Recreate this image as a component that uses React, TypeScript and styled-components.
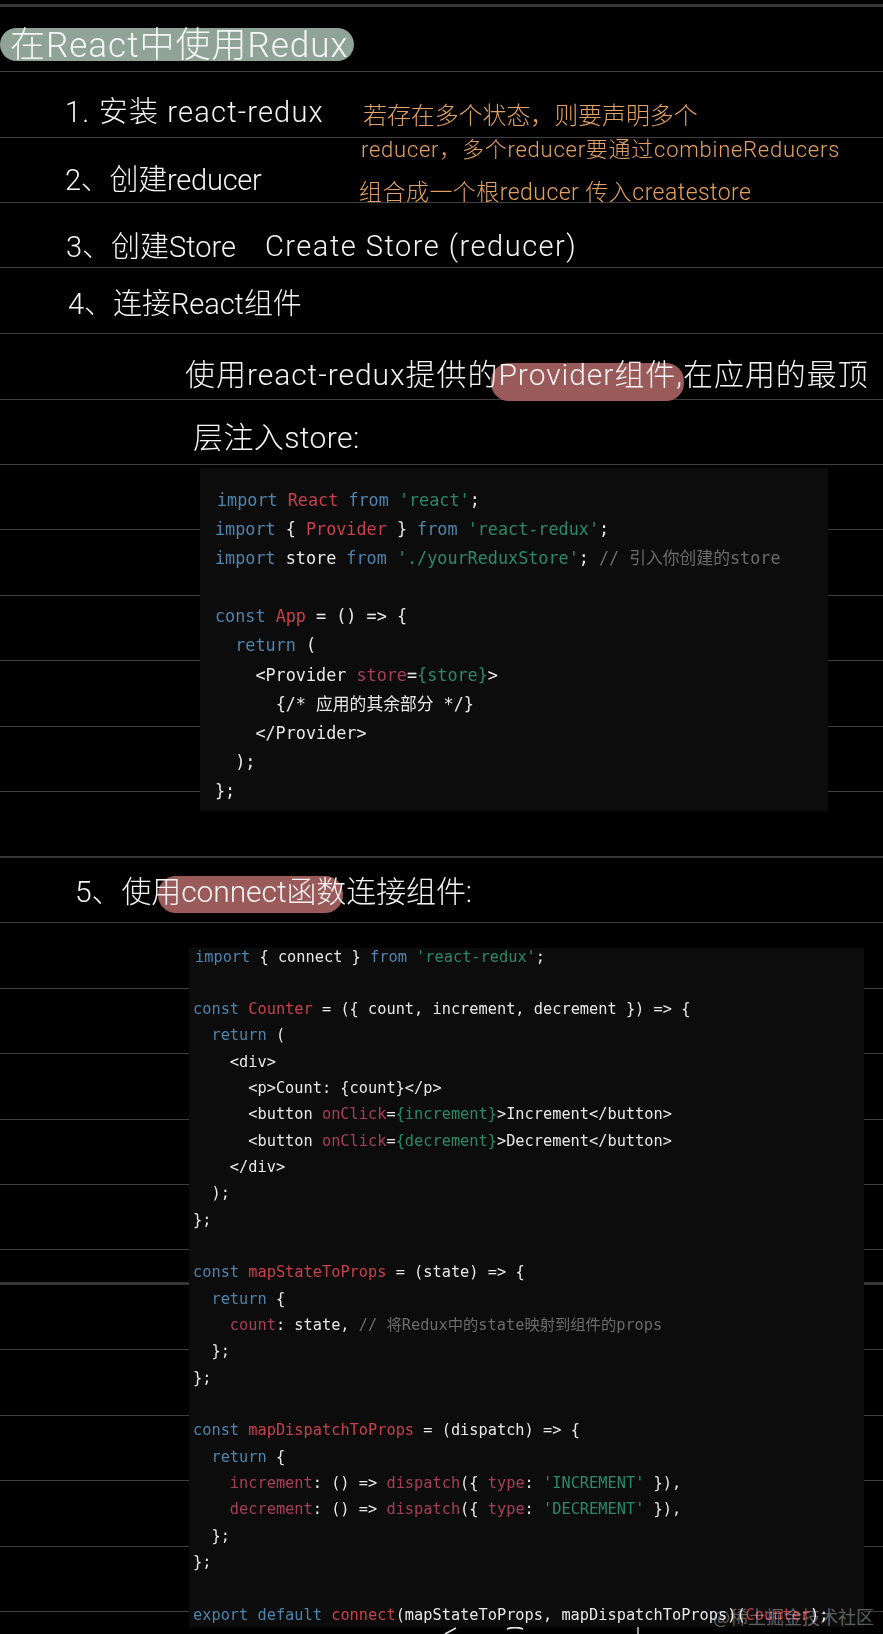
import React from "react";
import styled, { createGlobalStyle } from "styled-components";

const Global = createGlobalStyle`
  html, body { margin: 0; padding: 0; background: #000; }
`;

const Sheet = styled.main`
  position: relative;
  width: 883px;
  height: 1634px;
  overflow: hidden;
  background: #000;
  display: grid;
  grid-template-columns: 883px;
  grid-template-rows: 1634px;
`;

const RuleLayer = styled.div`
  grid-area: 1 / 1;
  display: flex;
  flex-direction: column;
`;

const Rule = styled.div<{ $gap: number; $weight: number }>`
  flex: none;
  margin-top: ${(p) => p.$gap}px;
  height: ${(p) => p.$weight}px;
  background: ${(p) => (p.$weight > 1 ? "#363636" : "#3f3f3f")};
`;

const ContentLayer = styled.div`
  grid-area: 1 / 1;
  display: flex;
  flex-direction: column;
  filter: blur(0.35px);
`;

const handFont = `Roboto, "Noto Sans CJK SC", sans-serif`;

const TitlePill = styled.h1`
  flex: none;
  box-sizing: border-box;
  width: 354px;
  height: 33px;
  margin: 28px 0 0;
  padding-left: 10px;
  border-radius: 17px;
  background: #8fa397;
  color: #f6f6f6;
  font: 300 35px/35px ${handFont};
  letter-spacing: 1px;
  white-space: nowrap;
`;

const PlanGrid = styled.section`
  flex: none;
  height: 136px;
  margin-top: 17px;
  display: grid;
  grid-template-columns: 359px 1fr;
`;

const Steps = styled.div`
  display: flex;
  flex-direction: column;
`;

const Hand = styled.div<{ $indent: number; $height: number; $size: number; $track: number }>`
  flex: none;
  isolation: isolate;
  height: ${(p) => p.$height}px;
  padding-left: ${(p) => p.$indent}px;
  color: #f4f4f4;
  font: 300 ${(p) => p.$size}px/${(p) => p.$height}px ${handFont};
  letter-spacing: ${(p) => p.$track}px;
  white-space: nowrap;
`;

const Notes = styled.div`
  padding-top: 20px;
  display: flex;
  flex-direction: column;
`;

const Note = styled.div<{ $indent: number; $height: number; $size: number; $track: number }>`
  flex: none;
  height: ${(p) => p.$height}px;
  padding-left: ${(p) => p.$indent}px;
  color: #e3a163;
  font: 300 ${(p) => p.$size}px/${(p) => p.$height}px ${handFont};
  letter-spacing: ${(p) => p.$track}px;
  white-space: nowrap;
`;

const StepWithCall = styled.div`
  flex: none;
  display: grid;
  grid-template-columns: 265px 1fr;
`;

const Mark = styled.span<{ $left: number; $right: number; $top: number; $bottom: number }>`
  position: relative;
  display: inline-block;
  &::before {
    content: "";
    position: absolute;
    z-index: -1;
    top: ${(p) => p.$top}px;
    bottom: ${(p) => p.$bottom}px;
    left: ${(p) => p.$left}px;
    right: ${(p) => p.$right}px;
    border-radius: 18px;
    background: #9a5a5a;
  }
`;

const Spacer = styled.div<{ $height: number }>`
  flex: none;
  height: ${(p) => p.$height}px;
`;

const CodePanel = styled.pre<{ $left: number; $width: number; $height: number; $size: number; $leading: number; $pad: string }>`
  flex: none;
  box-sizing: border-box;
  width: ${(p) => p.$width}px;
  height: ${(p) => p.$height}px;
  margin: 0 0 0 ${(p) => p.$left}px;
  padding: ${(p) => p.$pad};
  background: #0c0c0d;
  color: #e8e8e8;
  font: 400 ${(p) => p.$size}px/${(p) => p.$leading}px "DejaVu Sans Mono", "Noto Sans CJK SC", monospace;
  white-space: pre;
`;

const CodeLine = styled.div<{ $nudge?: number; $lift?: number; $leading: number }>`
  height: ${(p) => p.$leading}px;
  margin-top: ${(p) => -(p.$lift ?? 0)}px;
  padding-left: ${(p) => p.$nudge ?? 0}px;
`;

const Kw = styled.span`color: #4f84ad;`;
const Id = styled.span`color: #c8414c;`;
const At = styled.span`color: #a83e5e;`;
const Str = styled.span`color: #2c8a68;`;
const Cm = styled.span`color: #6b6b6b;`;

const Watermark = styled.div`
  position: absolute;
  right: 9px;
  bottom: 7px;
  color: rgba(255, 255, 255, 0.36);
  font: 400 18px/22px "Noto Sans CJK SC", sans-serif;
  white-space: nowrap;
`;

const Fragments = styled.svg`
  flex: none;
  display: block;
  width: 883px;
  height: 7px;
`;

const rules: [number, number][] = [
  [4, 3], [71, 1], [137, 1], [202, 1], [267, 1], [333, 1], [399, 1], [464, 1], [529, 1], [595, 1], [660, 1],
  [726, 1], [791, 1], [856, 2], [922, 1], [988, 1], [1053, 1], [1119, 1], [1184, 1], [1249, 1], [1282, 3],
  [1349, 1], [1415, 1], [1480, 1], [1546, 1], [1611, 1],
];

const Lined = ({ rows }: { rows: [number, number][] }) => (
  <RuleLayer>
    {rows.map(([y, w], i) => {
      const prev = i === 0 ? 0 : rows[i - 1][0] + rows[i - 1][1];
      return <Rule key={y} $gap={y - prev} $weight={w} />;
    })}
  </RuleLayer>
);

const FirstBlock = () => {
  const L = 29.1;
  return (
    <CodePanel $left={200} $width={628} $height={343} $size={16.8} $leading={L} $pad="18px 0 0 15px">
      <CodeLine $leading={L} $nudge={2}><Kw>import</Kw> <Id>React</Id> <Kw>from</Kw> <Str>'react'</Str>;</CodeLine>
      <CodeLine $leading={L}><Kw>import</Kw> {"{"} <Id>Provider</Id> {"}"} <Kw>from</Kw> <Str>'react-redux'</Str>;</CodeLine>
      <CodeLine $leading={L}><Kw>import</Kw> store <Kw>from</Kw> <Str>'./yourReduxStore'</Str>; <Cm>// 引入你创建的store</Cm></CodeLine>
      <CodeLine $leading={L} />
      <CodeLine $leading={L}><Kw>const</Kw> <Id>App</Id> = () =&gt; {"{"}</CodeLine>
      <CodeLine $leading={L}>  <Kw>return</Kw> (</CodeLine>
      <CodeLine $leading={L}>    &lt;Provider <At>store</At>=<Str>{"{store}"}</Str>&gt;</CodeLine>
      <CodeLine $leading={L}>      {"{/* 应用的其余部分 */}"}</CodeLine>
      <CodeLine $leading={L}>    &lt;/Provider&gt;</CodeLine>
      <CodeLine $leading={L}>  );</CodeLine>
      <CodeLine $leading={L}>{"};"}</CodeLine>
    </CodePanel>
  );
};

const SecondBlock = () => {
  const L = 26.33;
  return (
    <CodePanel $left={189} $width={675} $height={679} $size={15.3} $leading={L} $pad="0 0 0 4px">
      <CodeLine $leading={L} $nudge={2} $lift={4.5}><Kw>import</Kw> {"{"} connect {"}"} <Kw>from</Kw> <Str>'react-redux'</Str>;</CodeLine>
      <CodeLine $leading={L} />
      <CodeLine $leading={L}><Kw>const</Kw> <Id>Counter</Id> = ({"{"} count, increment, decrement {"}"}) =&gt; {"{"}</CodeLine>
      <CodeLine $leading={L}>  <Kw>return</Kw> (</CodeLine>
      <CodeLine $leading={L}>    &lt;div&gt;</CodeLine>
      <CodeLine $leading={L}>      &lt;p&gt;Count: {"{count}"}&lt;/p&gt;</CodeLine>
      <CodeLine $leading={L}>      &lt;button <At>onClick</At>=<Str>{"{increment}"}</Str>&gt;Increment&lt;/button&gt;</CodeLine>
      <CodeLine $leading={L}>      &lt;button <At>onClick</At>=<Str>{"{decrement}"}</Str>&gt;Decrement&lt;/button&gt;</CodeLine>
      <CodeLine $leading={L}>    &lt;/div&gt;</CodeLine>
      <CodeLine $leading={L}>  );</CodeLine>
      <CodeLine $leading={L}>{"};"}</CodeLine>
      <CodeLine $leading={L} />
      <CodeLine $leading={L}><Kw>const</Kw> <Id>mapStateToProps</Id> = (state) =&gt; {"{"}</CodeLine>
      <CodeLine $leading={L}>  <Kw>return</Kw> {"{"}</CodeLine>
      <CodeLine $leading={L}>    <At>count</At>: state, <Cm>// 将Redux中的state映射到组件的props</Cm></CodeLine>
      <CodeLine $leading={L}>  {"};"}</CodeLine>
      <CodeLine $leading={L}>{"};"}</CodeLine>
      <CodeLine $leading={L} />
      <CodeLine $leading={L}><Kw>const</Kw> <Id>mapDispatchToProps</Id> = (dispatch) =&gt; {"{"}</CodeLine>
      <CodeLine $leading={L}>  <Kw>return</Kw> {"{"}</CodeLine>
      <CodeLine $leading={L}>    <At>increment</At>: () =&gt; <At>dispatch</At>({"{"} <At>type</At>: <Str>'INCREMENT'</Str> {"}"}),</CodeLine>
      <CodeLine $leading={L}>    <At>decrement</At>: () =&gt; <At>dispatch</At>({"{"} <At>type</At>: <Str>'DECREMENT'</Str> {"}"}),</CodeLine>
      <CodeLine $leading={L}>  {"};"}</CodeLine>
      <CodeLine $leading={L}>{"};"}</CodeLine>
      <CodeLine $leading={L} />
      <CodeLine $leading={L}><Kw>export</Kw> <Kw>default</Kw> <Id>connect</Id>(mapStateToProps, mapDispatchToProps)(<Id>Counter</Id>);</CodeLine>
    </CodePanel>
  );
};

export default function App() {
  return (
    <>
      <Global />
      <Sheet>
        <Lined rows={rules} />
        <ContentLayer>
          <TitlePill>在React中使用Redux</TitlePill>
          <PlanGrid>
            <Steps>
              <Hand $indent={65} $height={68} $size={29} $track={1.2}>1. 安装 react-redux</Hand>
              <Hand $indent={65} $height={68} $size={29} $track={-0.25}>2、创建reducer</Hand>
            </Steps>
            <Notes>
              <Note $indent={4} $height={36} $size={24} $track={-0.1}>若存在多个状态，则要声明多个</Note>
              <Note $indent={2} $height={32} $size={22} $track={0.75}>reducer，多个reducer要通过combineReducers</Note>
              <Note $indent={0} $height={54} $size={23} $track={0.46}>组合成一个根reducer 传入createstore</Note>
            </Notes>
          </PlanGrid>
          <StepWithCall>
            <Hand $indent={66} $height={66} $size={29} $track={0}>3、创建Store</Hand>
            <Hand $indent={0} $height={64} $size={29} $track={1.5}>Create Store (reducer)</Hand>
          </StepWithCall>
          <Hand $indent={68} $height={48} $size={29} $track={-0.05}>4、连接React组件</Hand>
          <Spacer $height={24} />
          <Hand $indent={185} $height={46} $size={30} $track={0.95}>
            使用react-redux提供的<Mark $left={-7} $right={-8} $top={11} $bottom={-3}>Provider组件</Mark>,在应用的最顶
          </Hand>
          <Spacer $height={17} />
          <Hand $indent={193} $height={46} $size={30} $track={0.4}>层注入store:</Hand>
          <Spacer $height={7} />
          <FirstBlock />
          <Spacer $height={58} />
          <Hand $indent={75} $height={46} $size={30} $track={-0.1}>
            5、使用<Mark $left={-23} $right={3} $top={7} $bottom={2}>connect函数</Mark>连接组件:
          </Hand>
          <Spacer $height={33} />
          <SecondBlock />
          <Fragments viewBox="0 0 883 7" aria-hidden="true">
            <path d="M445 7 L456 1" stroke="#e8e8e8" strokeWidth="1.6" fill="none" />
            <path d="M507 2 Q515 -1 523 2" stroke="#e8e8e8" strokeWidth="1.8" fill="none" />
            <path d="M638 0 L638 7" stroke="#d8d8d8" strokeWidth="1.4" fill="none" />
          </Fragments>
        </ContentLayer>
        <Watermark>@稀土掘金技术社区</Watermark>
      </Sheet>
    </>
  );
}
